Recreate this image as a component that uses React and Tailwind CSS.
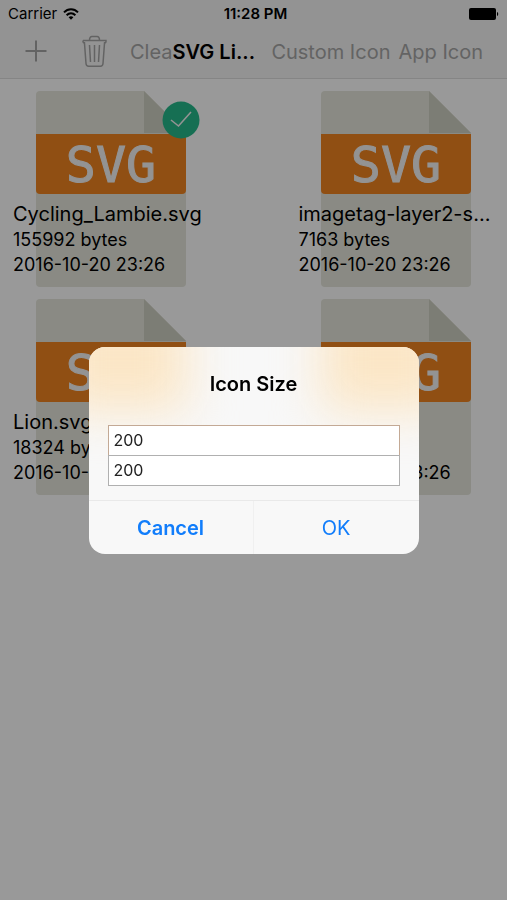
import React from 'react'

const files = [
  { id: 1, name: 'Cycling_Lambie.svg', size: '155992 bytes', date: '2016-10-20 23:26', selected: true },
  { id: 2, name: 'imagetag-layer2-s...', size: '7163 bytes', date: '2016-10-20 23:26' },
  { id: 3, name: 'Lion.svg', size: '18324 bytes', date: '2016-10-20 23:26' },
  { id: 4, name: 'Tiger.svg', size: '96543 bytes', date: '2016-10-20 23:26' },
]

function StatusBar() {
  return (
    <div className="grid grid-cols-3 items-center h-7 px-2 text-[15px]">
      <div className="flex items-center gap-1.5">
        <span>Carrier</span>
        <svg width="16" height="12" viewBox="0 0 16 12" fill="none" stroke="currentColor" strokeWidth="2">
          <path d="M1 4.4C5 .3 11 .3 15 4.4" />
          <path d="M3.6 7.2C6.2 4.7 9.8 4.7 12.4 7.2" />
          <path d="M8 11.8L5.6 9.2C7 8 9 8 10.4 9.2Z" fill="currentColor" stroke="none" />
        </svg>
      </div>
      <div className="pl-1 text-center font-semibold whitespace-nowrap">11:28 PM</div>
      <div className="flex justify-end">
        <svg width="30" height="12" viewBox="0 0 30 12" fill="currentColor">
          <rect x="0" y="0" width="27" height="12" rx="2" />
          <path d="M28 4C29.6 4.4 29.6 7.6 28 8Z" />
        </svg>
      </div>
    </div>
  )
}

function NavBar() {
  return (
    <nav className="flex items-center h-[51px] px-6 pb-0.5 text-xl whitespace-nowrap text-[#a6a6a6] border-b border-[#dedede]">
      <button type="button" aria-label="Add" className="mr-8">
        <svg width="24" height="24" viewBox="0 0 24 24" stroke="currentColor" strokeWidth="2" fill="none">
          <path d="M1.500 11H22.500M12 .500V21.500" />
        </svg>
      </button>
      <button type="button" aria-label="Delete">
        <svg width="28" height="34" viewBox="0 0 28 34" fill="none" stroke="currentColor" strokeWidth="1.500">
          <path d="M3 5.500H26Q26.200 8 24.600 8M3 5.500Q2.800 8 4.400 8M4.400 7L6 28.500C6.200 30.500 7 31.200 8.500 31.200H20.500C22 31.200 22.800 30.500 23 28.500L24.600 7" />
          <path d="M9.500 5.300C9.500 2.500 10.500 1.500 12 1.500H17C18.500 1.500 19.500 2.500 19.500 5.300" />
          <path d="M9.500 10L10.500 27M14.500 10V27M19.500 10L18.500 27" />
        </svg>
      </button>
      <button type="button" aria-label="Clear" className="ml-[22px]">Clea</button>
      <h1 className="font-semibold text-black">SVG Li...</h1>
      <div className="flex gap-2 ml-auto">
        <button type="button">Custom Icon</button>
        <button type="button">App Icon</button>
      </div>
    </nav>
  )
}

function FileIcon() {
  return (
    <svg className="block" width="150" height="196" viewBox="0 0 150 196">
      <path d="M4 0H108L150 42V192Q150 196 146 196H4Q0 196 0 192V4Q0 0 4 0Z" fill="#e6e7dc" />
      <path d="M108 0L150 42H108Z" fill="#cfd0c4" />
      <path d="M0 43H150V99Q150 103 146 103H4Q0 103 0 99Z" fill="#f08421" />
      <text x="75" y="91" textAnchor="middle" fontFamily="DejaVu Sans Mono, monospace" fontSize="50" fill="#f5f5f5" stroke="#f5f5f5">SVG</text>
    </svg>
  )
}

function FileCell({ file }) {
  return (
    <li className="relative flex justify-center">
      <div className="relative">
        <FileIcon />
        {file.selected && (
          <svg className="absolute top-2.5 -right-3.5" width="38" height="38" viewBox="0 0 38 38" fill="none">
            <circle cx="19" cy="19" r="18.500" fill="#26b98b" />
            <path d="M9 19L16.500 25L29 11" stroke="#f5f5f5" strokeWidth="1.600" />
          </svg>
        )}
      </div>
      <div className="absolute inset-x-0 bottom-2.5 pl-[13px] whitespace-nowrap text-lg leading-[25px]">
        <p className="text-xl leading-[26px]">{file.name}</p>
        <p>{file.size}</p>
        <p>{file.date}</p>
      </div>
    </li>
  )
}

function IconSizeDialog() {
  return (
    <div role="dialog" aria-labelledby="dialog-title" className="relative isolate w-[330px] rounded-2xl overflow-hidden bg-[#f8f8f8]">
      {/* Icons glowing through the frosted panel */}
      <div className="absolute -z-10 -left-8 -top-10 w-[130px] h-[104px] bg-[#fbe6c6] blur-xl" />
      <div className="absolute -z-10 -right-8 -top-10 w-[130px] h-[104px] bg-[#fbe6c6] blur-xl" />
      <h2 id="dialog-title" className="pt-[25px] text-center text-xl leading-6 font-semibold text-black">Icon Size</h2>
      <div className="mx-[19px] mt-[29px] mb-3.5">
        <input aria-label="Width" defaultValue="200" className="block w-full h-[31px] px-[5px] bg-white border border-[#c3a995] text-base text-[#222]" />
        <input aria-label="Height" defaultValue="200" className="block w-full h-[31px] -mt-px px-[5px] bg-white border border-[#b0b0b0] text-base text-[#222]" />
      </div>
      <div className="grid grid-cols-2 h-[54px] border-t border-[#e9e9e9] text-xl text-[#117dfb]">
        <button type="button" className="pt-0.5 font-semibold border-r border-[#f0f0f0]">Cancel</button>
        <button type="button" className="pt-0.5">OK</button>
      </div>
    </div>
  )
}

export default function App() {
  return (
    <div className="min-h-screen bg-white text-black font-['Inter',sans-serif]">
      <header className="bg-[#f5f5f5]">
        <StatusBar />
        <NavBar />
      </header>
      <main>
        <ul className="grid grid-cols-2 gap-x-16 gap-y-3 pt-3">
          {files.map((file) => (
            <FileCell key={file.id} file={file} />
          ))}
        </ul>
      </main>

      {/* Dimmed backdrop with the dialog in the middle */}
      <div className="fixed inset-0 flex items-center justify-center bg-black/40">
        <IconSizeDialog />
      </div>
    </div>
  )
}
